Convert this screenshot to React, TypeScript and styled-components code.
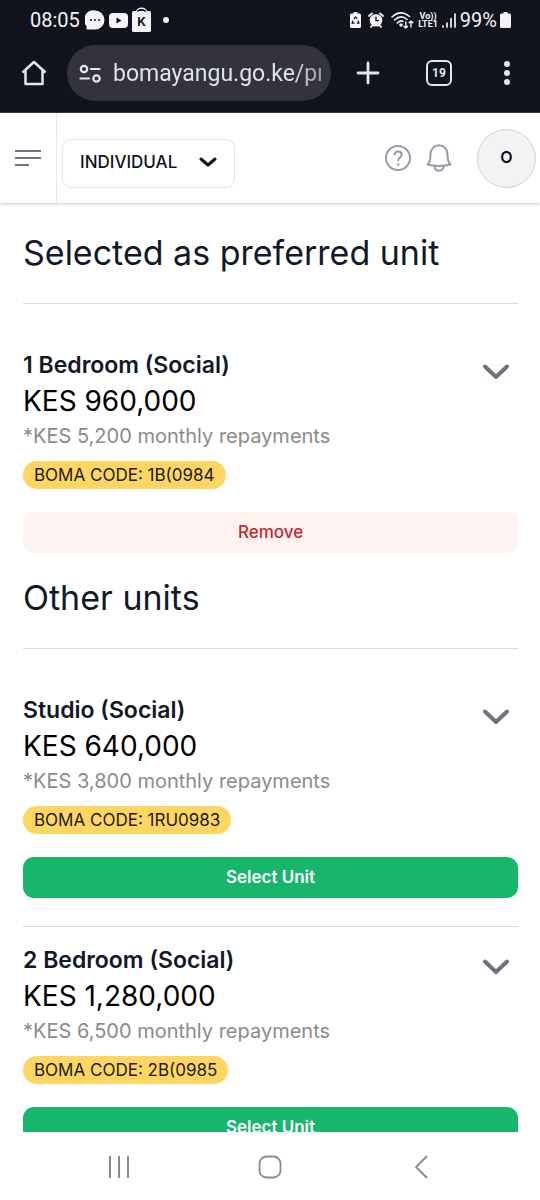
import React from "react";
import styled, { createGlobalStyle } from "styled-components";

const GlobalStyle = createGlobalStyle`
  *, *::before, *::after { box-sizing: border-box; }
  body { margin: 0; background: #fff; font-family: Inter, "Liberation Sans", sans-serif; }
  button, input, select { font: inherit; }
  button { border: 0; padding: 0; background: none; color: inherit; cursor: pointer; }
  svg { display: block; flex: none; }
`;

const Screen = styled.div`
  display: flex;
  flex-direction: column;
  height: 100vh;
  overflow: hidden;
`;

const BrowserChrome = styled.header`
  flex: none;
  background: #11131d;
  color: #e4e5f2;
  padding-bottom: 11px;
  border-bottom: 1px solid #3a3a45;
`;

const StatusBar = styled.div`
  display: flex;
  align-items: center;
  justify-content: space-between;
  height: 40px;
  padding: 0 29px 0 30px;
  color: #f4f4f6;
  font: 400 20px/24px Roboto, sans-serif;
`;

const StatusGroup = styled.div<{ $gap: number }>`
  display: flex;
  align-items: center;
  gap: ${({ $gap }) => $gap}px;
`;

const VoLte = styled.span`
  display: flex;
  flex-direction: column;
  font: 700 9px/8px Roboto, sans-serif;
  text-align: center;
`;

const Toolbar = styled.div`
  display: flex;
  align-items: center;
  margin-top: 5px;
  height: 56px;
  padding: 0 18px 0 20px;
`;

const IconButton = styled.button`
  display: grid;
  place-items: center;
  flex: none;
`;

const AddressBar = styled.label`
  display: flex;
  align-items: center;
  gap: 12px;
  flex: 1;
  min-width: 0;
  height: 56px;
  margin: 0 25px 0 19px;
  padding: 2px 10px 0 12px;
  border-radius: 28px;
  background: #32333f;
`;

const Address = styled.input`
  flex: 1;
  min-width: 0;
  padding: 0;
  border: 0;
  outline: 0;
  background: none;
  color: #e0e1ee;
  font: 400 23px/32px Roboto, sans-serif;
  mask-image: linear-gradient(to right, #000 85%, rgba(0, 0, 0, 0.6));
`;

const ToolbarActions = styled.div`
  display: flex;
  align-items: center;
  gap: 46px;
`;

const TabCount = styled.span`
  display: grid;
  place-items: center;
  width: 26px;
  height: 26px;
  border: 2px solid currentColor;
  border-radius: 6px;
  font: 700 12px/12px Roboto, sans-serif;
`;

const AppBar = styled.header`
  position: relative;
  display: flex;
  align-items: center;
  flex: none;
  height: 90px;
  padding-right: 4px;
  background: #fff;
  box-shadow: 0 1px 3px rgba(0, 0, 0, 0.22);
`;

const MenuCell = styled.div`
  display: grid;
  place-items: center;
  width: 57px;
  height: 100%;
  border-right: 1px solid #e5e7eb;
`;

const AccountPicker = styled.div`
  display: grid;
  align-items: center;
  margin: 10px auto 0 5px;
  color: #10141f;

  > * { grid-area: 1 / 1; }
  > svg { justify-self: end; margin-right: 18px; pointer-events: none; }
`;

const AccountSelect = styled.select`
  appearance: none;
  width: 173px;
  height: 49px;
  padding: 0 48px 2px 17px;
  border: 1px solid #e1e3e6;
  border-radius: 9px;
  background: #fff;
  color: inherit;
  font-size: 17px;
  font-weight: 500;
`;

const AppActions = styled.div`
  display: flex;
  align-items: center;
  gap: 14px;
  color: #959ca8;
`;

const Avatar = styled.button`
  width: 59px;
  height: 59px;
  margin-left: 11px;
  padding-bottom: 2px;
  border: 1px solid #cfd1d4;
  border-radius: 50%;
  background: #f2f3f5;
  color: #0b0d12;
  font-size: 16px;
  font-weight: 600;
`;

const Content = styled.main`
  display: flex;
  flex-direction: column;
  gap: 21px;
  flex: 1;
  min-height: 0;
  overflow: hidden;
  padding: 26px 22px 0 23px;
`;

const Heading = styled.h1`
  margin: 0 0 26px;
  color: #111827;
  font-size: 34px;
  font-weight: 400;
  line-height: 48px;
`;

const UnitList = styled.ul`
  list-style: none;
  margin: 0;
  padding: 28px 0 0;
  border-top: 1px solid #d9dadc;
`;

const UnitItem = styled.li`
  padding-top: 15px;

  & + & {
    margin-top: 28px;
    border-top: 1px solid #d9dadc;
  }
`;

const UnitSummary = styled.div`
  display: flex;
  justify-content: space-between;
  align-items: flex-start;
  padding-right: 8px;
`;

const UnitName = styled.h2`
  margin: 0;
  color: #111827;
  font-size: 23px;
  font-weight: 600;
  line-height: 36px;
`;

const Price = styled.p`
  margin: 0;
  color: #000;
  font-size: 28px;
  line-height: 36px;
`;

const Repayment = styled.p`
  margin: 0 0 8px;
  color: #8c8a8a;
  font-size: 20px;
  line-height: 34px;
`;

const Code = styled.span`
  display: block;
  width: fit-content;
  padding: 0 11px;
  border-radius: 14px;
  background: #ffd661;
  color: #1c1a12;
  font-size: 17px;
  line-height: 28px;
`;

const Toggle = styled(IconButton)`
  margin-top: 16px;
  color: #6b7280;
`;

const ActionButton = styled.button<{ $danger?: boolean }>`
  display: block;
  width: 100%;
  height: 41px;
  margin-top: 23px;
  padding-bottom: 2px;
  border-radius: 11px;
  background: ${({ $danger }) => ($danger ? "#fff3f2" : "#17b66b")};
  color: ${({ $danger }) => ($danger ? "#c7282b" : "#fff")};
  font-size: 17px;
  font-weight: ${({ $danger }) => ($danger ? 500 : 600)};
`;

const SystemNav = styled.nav`
  display: grid;
  grid-template-columns: 1fr 1fr 1fr;
  align-items: center;
  flex: none;
  width: 84%;
  margin: 0 auto;
  padding-top: 2px;
  height: 68px;
  color: #8b8b8b;
`;

type Unit = { name: string; price: string; monthly: string; code: string; selected?: boolean };

const preferred: Unit[] = [
  { name: "1 Bedroom (Social)", price: "960,000", monthly: "5,200", code: "1B(0984", selected: true },
];

const others: Unit[] = [
  { name: "Studio (Social)", price: "640,000", monthly: "3,800", code: "1RU0983" },
  { name: "2 Bedroom (Social)", price: "1,280,000", monthly: "6,500", code: "2B(0985" },
];

const StatusIcons = () => (
  <StatusGroup $gap={4} aria-hidden="true">
    <svg width="20" height="20" viewBox="0 0 20 20">
      <path d="M10 0.5a9.5 9.5 0 0 1 0 19H1.5V16.2A9.5 9.5 0 0 1 10 .5Z" fill="#f4f4f6" />
      <g fill="#11131d"><circle cx="6" cy="10" r="1" /><circle cx="10" cy="10" r="1" /><circle cx="14" cy="10" r="1" /></g>
    </svg>
    <svg width="19" height="15" viewBox="0 0 19 15">
      <rect width="19" height="15" rx="4" fill="#f4f4f6" />
      <path d="M7.5 4.5v6l5-3Z" fill="#11131d" />
    </svg>
    <svg width="19" height="26" viewBox="0 0 19 26">
      <path d="M4.500 6C4.500-.4 14.500-.4 14.500 6" fill="none" stroke="#f4f4f6" strokeWidth="1.500" />
      <rect y="4" width="19" height="21" rx="1.500" fill="#f4f4f6" />
      <path d="M5.300 4.600C7 2.600 12 2.600 13.700 4.600" fill="none" stroke="#11131d" strokeWidth="1.500" />
      <text x="9.500" y="19" textAnchor="middle" fontFamily="Inter, sans-serif" fontSize="12" fontWeight="700" fill="#11131d">K</text>
    </svg>
  </StatusGroup>
);

const BatterySaverIcon = () => (
  <svg width="11" height="16" viewBox="0 0 11 16">
    <path d="M3.500 0h4v1.500H9.500Q11 1.500 11 3v11.500Q11 16 9.500 16h-8Q0 16 0 14.500V3Q0 1.500 1.500 1.500h2Z" fill="#f4f4f6" />
    <path d="M3.900 7 5.500 4.800 7.100 7M8.100 8.600l.9 2.600H6.700M4.600 11.200H2l.9-2.600" fill="none" stroke="#11131d" strokeWidth="1.200" strokeLinejoin="round" />
  </svg>
);

const AlarmIcon = () => (
  <svg width="16" height="16" viewBox="0 0 16 16">
    <circle cx="8" cy="8.300" r="6.300" fill="#f4f4f6" />
    <path d="M1 4 4 1.300M15 4l-3-2.700M3 15l1.500-2M13 15l-1.500-2" stroke="#f4f4f6" strokeWidth="1.800" strokeLinecap="round" />
    <path d="M8 4.800v3.800h3" fill="none" stroke="#11131d" strokeWidth="1.400" />
  </svg>
);

const WifiIcon = () => (
  <svg width="23" height="17" viewBox="0 0 23 17" fill="none" stroke="#f4f4f6" strokeWidth="1.600" strokeLinecap="round">
    <path d="M1 5q8.500-8 17.500-.5M3.500 8q6.500-6 12.500-.5M6.300 11Q10 7.700 12 9.500" />
    <circle cx="10" cy="13" r="1" fill="#f4f4f6" />
    <path d="M14.800 10v6M13 14.200l1.800 1.800 1.800-1.800M20 15V9M18.200 10.800 20 9l1.800 1.800" strokeWidth="1.400" />
  </svg>
);

const SignalIcon = () => (
  <svg width="14" height="15" viewBox="0 0 14 15" stroke="#f4f4f6" strokeWidth="1.700" strokeLinecap="round">
    <path d="M1 13v1M5 10v4M9 5.500V14M13 1v13" />
  </svg>
);

const BatteryIcon = () => (
  <svg width="11" height="16" viewBox="0 0 11 16">
    <path d="M3.500 0h4v1.500H9.500Q11 1.500 11 3v11.500Q11 16 9.500 16h-8Q0 16 0 14.500V3Q0 1.500 1.500 1.500h2Z" fill="#f4f4f6" />
  </svg>
);

function UnitCard({ unit }: { unit: Unit }) {
  return (
    <UnitItem>
      <UnitSummary>
        <div>
          <UnitName>{unit.name}</UnitName>
          <Price>KES {unit.price}</Price>
          <Repayment>*KES {unit.monthly} monthly repayments</Repayment>
          <Code>BOMA CODE: {unit.code}</Code>
        </div>
        <Toggle type="button" aria-label={`Show details of ${unit.name}`}>
          <svg width="28" height="17" viewBox="0 0 28 17" fill="none" stroke="currentColor" strokeWidth="4" strokeLinecap="round" strokeLinejoin="round">
            <path d="m3 3.500 11 10.500L25 3.500" />
          </svg>
        </Toggle>
      </UnitSummary>
      <ActionButton type="button" $danger={unit.selected}>
        {unit.selected ? "Remove" : "Select Unit"}
      </ActionButton>
    </UnitItem>
  );
}

function UnitSection({ title, units }: { title: string; units: Unit[] }) {
  return (
    <section>
      <Heading>{title}</Heading>
      <UnitList>
        {units.map((unit) => (
          <UnitCard key={unit.code} unit={unit} />
        ))}
      </UnitList>
    </section>
  );
}

export default function App() {
  return (
    <Screen>
      <GlobalStyle />
      <BrowserChrome>
        <StatusBar>
          <StatusGroup $gap={5}>
            <span>08:05</span>
            <StatusIcons />
            <svg width="18" height="8" viewBox="0 0 18 8"><circle cx="10" cy="4" r="3" fill="#f4f4f6" /></svg>
          </StatusGroup>
          <StatusGroup $gap={4}>
            <StatusGroup $gap={7}>
              <BatterySaverIcon />
              <AlarmIcon />
              <WifiIcon />
            </StatusGroup>
            <VoLte><span>Vo))</span><span>LTE1</span></VoLte>
            <SignalIcon />
            <StatusGroup $gap={3}>
              <span>99%</span>
              <BatteryIcon />
            </StatusGroup>
          </StatusGroup>
        </StatusBar>
        <Toolbar>
          <IconButton type="button" aria-label="Home">
            <svg width="28" height="28" viewBox="0 0 28 28" fill="none" stroke="currentColor" strokeWidth="2.500" strokeLinejoin="round">
              <path d="M2.500 13.500 14 3 25.500 13.500M5.500 11.500V25h17V11.500" />
            </svg>
          </IconButton>
          <AddressBar>
            <svg width="22" height="20" viewBox="0 0 22 20" fill="none" stroke="currentColor" strokeWidth="2.200" strokeLinecap="round">
              <circle cx="5" cy="5" r="3.200" /><path d="M12 5h8.500M1.500 14.500H10" /><circle cx="17.500" cy="14.500" r="3.200" />
            </svg>
            <Address aria-label="Address" readOnly value="bomayangu.go.ke/pr" />
          </AddressBar>
          <ToolbarActions>
            <IconButton type="button" aria-label="New tab">
              <svg width="24" height="24" viewBox="0 0 24 24" stroke="currentColor" strokeWidth="2.800" strokeLinecap="round">
                <path d="M12 2v20M2 12h20" />
              </svg>
            </IconButton>
            <IconButton type="button" aria-label="Open tabs"><TabCount>19</TabCount></IconButton>
            <IconButton type="button" aria-label="More options">
              <svg width="24" height="24" viewBox="0 0 24 24" fill="currentColor">
                <circle cx="9" cy="3" r="3" /><circle cx="9" cy="12" r="3" /><circle cx="9" cy="21" r="3" />
              </svg>
            </IconButton>
          </ToolbarActions>
        </Toolbar>
      </BrowserChrome>

      <AppBar>
        <MenuCell>
          <IconButton type="button" aria-label="Open menu">
            <svg width="26" height="20" viewBox="0 0 26 20" stroke="#6b7280" strokeWidth="2">
              <path d="M0 3h26M0 10h26M0 17h14" />
            </svg>
          </IconButton>
        </MenuCell>
        <AccountPicker>
          <AccountSelect aria-label="Account type" defaultValue="individual">
            <option value="individual">INDIVIDUAL</option>
          </AccountSelect>
          <svg width="18" height="12" viewBox="0 0 18 12" fill="none" stroke="currentColor" strokeWidth="3" strokeLinecap="round" strokeLinejoin="round">
            <path d="m2 2 7 6 7-6" />
          </svg>
        </AccountPicker>
        <AppActions>
          <IconButton type="button" aria-label="Help">
            <svg width="28" height="28" viewBox="0 0 28 28" fill="none" stroke="currentColor" strokeWidth="2" strokeLinecap="round">
              <circle cx="14" cy="14" r="12" />
              <path d="M10.500 10.500C10.800 8.700 12.200 7.600 14 7.600c2.100 0 3.700 1.300 3.700 3.100 0 2.700-3.400 2.700-3.400 5.600" />
              <circle cx="14.200" cy="20.500" r=".4" />
            </svg>
          </IconButton>
          <IconButton type="button" aria-label="Notifications">
            <svg width="26" height="28" viewBox="0 0 26 28" fill="none" stroke="currentColor" strokeWidth="2" strokeLinejoin="round">
              <path d="M1.500 20.500C4 18.500 4.500 16.500 4.500 10.500 4.500 5 8 1.300 13 1.300s8.500 3.700 8.500 9.200c0 6 .5 8 3 10Q13 23.500 1.500 20.500Z" />
              <path d="M8.500 22.200c.3 6 8.700 6 9 0" />
            </svg>
          </IconButton>
          <Avatar type="button" aria-label="Account O">O</Avatar>
        </AppActions>
      </AppBar>

      <Content>
        <UnitSection title="Selected as preferred unit" units={preferred} />
        <UnitSection title="Other units" units={others} />
      </Content>

      <SystemNav aria-label="System navigation">
        <IconButton type="button" aria-label="Recent apps">
          <svg width="22" height="24" viewBox="0 0 22 24" stroke="currentColor" strokeWidth="2">
            <path d="M2 1v22M11 1v22M20 1v22" />
          </svg>
        </IconButton>
        <IconButton type="button" aria-label="Home screen">
          <svg width="24" height="24" viewBox="0 0 24 24" fill="none" stroke="currentColor" strokeWidth="1.800">
            <rect x="1.500" y="1.500" width="21" height="21" rx="7" />
          </svg>
        </IconButton>
        <IconButton type="button" aria-label="Back">
          <svg width="14" height="24" viewBox="0 0 14 24" fill="none" stroke="currentColor" strokeWidth="1.800" strokeLinecap="round">
            <path d="M12.500 1.500 2 12l10.500 10.500" />
          </svg>
        </IconButton>
      </SystemNav>
    </Screen>
  );
}
